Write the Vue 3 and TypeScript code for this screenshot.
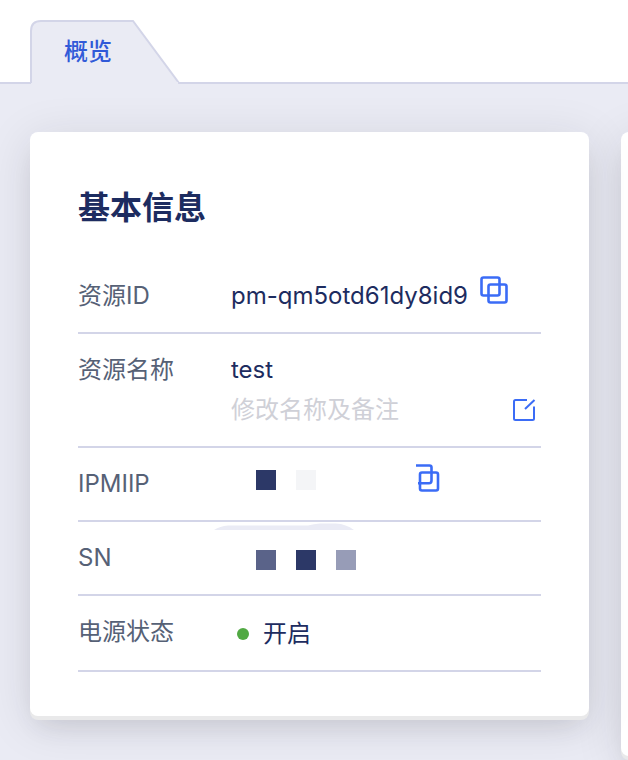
<script setup lang="ts">
import { ref } from 'vue'

const resourceId = ref<string>('pm-qm5otd61dy8id9')
const resourceName = ref<string>('test')
const powerState = ref<string>('开启')

function copyText(value: string): void {
  navigator.clipboard?.writeText(value)
}
</script>

<template>
  <div class="page">
    <nav class="tabs">
      <a class="tab" href="#overview">
        <svg class="tab-shape" viewBox="0 0 152 64" aria-hidden="true">
          <path d="M1 64V11Q1 1 11 1H103L149 63V64Z" fill="#eaebf4" />
          <path d="M1 63V11Q1 1 11 1H103L149 63H152" fill="none" stroke="#d3d5e8" stroke-width="2" />
          <path d="M2 63H148" stroke="#eaebf4" stroke-width="2" />
        </svg>
        <span class="tab-text">概览</span>
      </a>
    </nav>
    <main id="overview" class="content">
      <section class="card">
        <h2 class="title">基本信息</h2>
        <dl class="list">
          <div class="row">
            <dt>资源ID</dt>
            <dd class="inline">
              <span>{{ resourceId }}</span>
              <button class="icon-button raised" type="button" aria-label="复制" @click="copyText(resourceId)">
                <svg width="28" height="28" viewBox="0 0 28 28" fill="none" stroke="#3b6cf6" stroke-width="2.6">
                  <rect x="1.5" y="1.5" width="18" height="18" rx="2" />
                  <rect x="8.5" y="8.5" width="18" height="18" rx="2" />
                </svg>
              </button>
            </dd>
          </div>
          <div class="row">
            <dt>资源名称</dt>
            <dd>
              <div>{{ resourceName }}</div>
              <div class="remark">
                <span>修改名称及备注</span>
                <button class="icon-button" type="button" aria-label="编辑">
                  <svg width="24" height="24" viewBox="0 0 24 24" fill="none" stroke="#3b6cf6" stroke-width="2">
                    <path d="M15 2H3.5Q2 2 2 3.5V20.5Q2 22 3.5 22H20.5Q22 22 22 20.5V8.5" />
                    <path d="M13 11L22.5 2" />
                  </svg>
                </button>
              </div>
            </dd>
          </div>
          <div class="row">
            <dt>IPMIIP</dt>
            <dd class="inline masked">
              <span class="block dark"></span>
              <span class="block pale"></span>
              <button class="icon-button far" type="button" aria-label="复制">
                <svg width="24" height="28" viewBox="0 0 24 28" fill="none" stroke="#3b6cf6" stroke-width="2.6">
                  <path d="M0 1.5H13.500Q15.500 1.500 15.500 3.500V16.500Q15.500 19.300 13 19.300H2" />
                  <rect x="4" y="8.5" width="18" height="18" rx="2" />
                </svg>
              </button>
            </dd>
          </div>
          <div class="row">
            <dt>SN</dt>
            <dd class="inline masked lower">
              <span class="block slate"></span>
              <span class="block dark"></span>
              <span class="block soft"></span>
            </dd>
            <svg class="smudge" width="140" height="7" viewBox="0 0 140 7" aria-hidden="true">
              <path d="M0 7Q6 3 14 2.500H94Q100 1 106 0.500H122Q132 1 140 7Z" fill="#eaebf5" />
            </svg>
          </div>
          <div class="row">
            <dt>电源状态</dt>
            <dd class="inline power">
              <span class="dot"></span>
              <span>{{ powerState }}</span>
            </dd>
          </div>
        </dl>
      </section>
      <section class="card next"></section>
    </main>
  </div>
</template>

<style>
body {
  margin: 0;
  background: #eaebf4;
}
</style>

<style scoped>
.page {
  min-height: 100vh;
  display: flex;
  flex-direction: column;
  background: #eaebf4;
  color: #1d2c60;
  font-family: Inter, "Noto Sans CJK SC", sans-serif;
  font-size: 24px;
  line-height: 40px;
}
.tabs {
  box-sizing: border-box;
  height: 84px;
  padding: 20px 30px 0;
  background: #fff;
  border-bottom: 2px solid #d3d5e8;
}
.tab {
  position: relative;
  display: block;
  width: 152px;
  height: 64px;
  color: #315ad8;
  font-weight: 500;
  text-decoration: none;
}
.tab-shape {
  display: block;
  width: 152px;
  height: 64px;
}
.tab-text {
  position: absolute;
  left: 34px;
  top: 12px;
}
.content {
  flex: 1;
  display: grid;
  grid-template-columns: calc(100% - 39px) calc(100% - 39px);
  align-items: start;
  gap: 32px;
  padding: 48px 0 0 30px;
  overflow: hidden;
}
.card {
  position: relative;
  z-index: 1;
  box-sizing: border-box;
  padding: 52px 48px 44px;
  background: #fff;
  border-radius: 8px;
  box-shadow:
    0 4px 0 #e9e9ea,
    0 16px 24px -8px rgba(30, 32, 40, 0.1),
    0 8px 48px rgba(30, 32, 40, 0.12);
}
.next {
  z-index: 0;
  height: 624px;
}
.title {
  margin: 0;
  font-size: 32px;
  line-height: 48px;
  font-weight: 700;
}
.list {
  margin: 0;
  padding-top: 28px;
}
.row {
  position: relative;
  display: grid;
  grid-template-columns: 153px minmax(0, 1fr);
  padding: 16px 0;
  border-bottom: 2px solid #d3d5e8;
}
.row:last-child {
  padding-bottom: 18px;
}
dt {
  color: #566176;
}
dd {
  margin: 0;
}
.inline {
  display: flex;
  align-items: center;
  height: 40px;
}
.icon-button {
  display: block;
  padding: 0;
  border: 0;
  background: none;
  cursor: pointer;
}
.icon-button svg {
  display: block;
}
.raised {
  margin: 0 0 12px 12px;
}
.remark {
  display: flex;
  align-items: center;
  justify-content: space-between;
  padding-right: 5px;
  color: #cfd0d7;
}
.masked {
  gap: 20px;
  padding-left: 25px;
  height: 32px;
}
.lower {
  height: 44px;
  margin-bottom: -4px;
}
.block {
  width: 20px;
  height: 20px;
}
.dark {
  background: #2c3867;
}
.pale {
  background: #f4f5f7;
}
.slate {
  background: #5a6389;
}
.soft {
  background: #979cb7;
}
.far {
  margin: 0 0 4px 80px;
}
.smudge {
  position: absolute;
  left: 136px;
  top: 1px;
}
.power {
  gap: 14px;
  padding-left: 6px;
  height: 44px;
  margin-bottom: -4px;
}
.dot {
  width: 12px;
  height: 12px;
  border-radius: 50%;
  background: #51a943;
}
</style>
